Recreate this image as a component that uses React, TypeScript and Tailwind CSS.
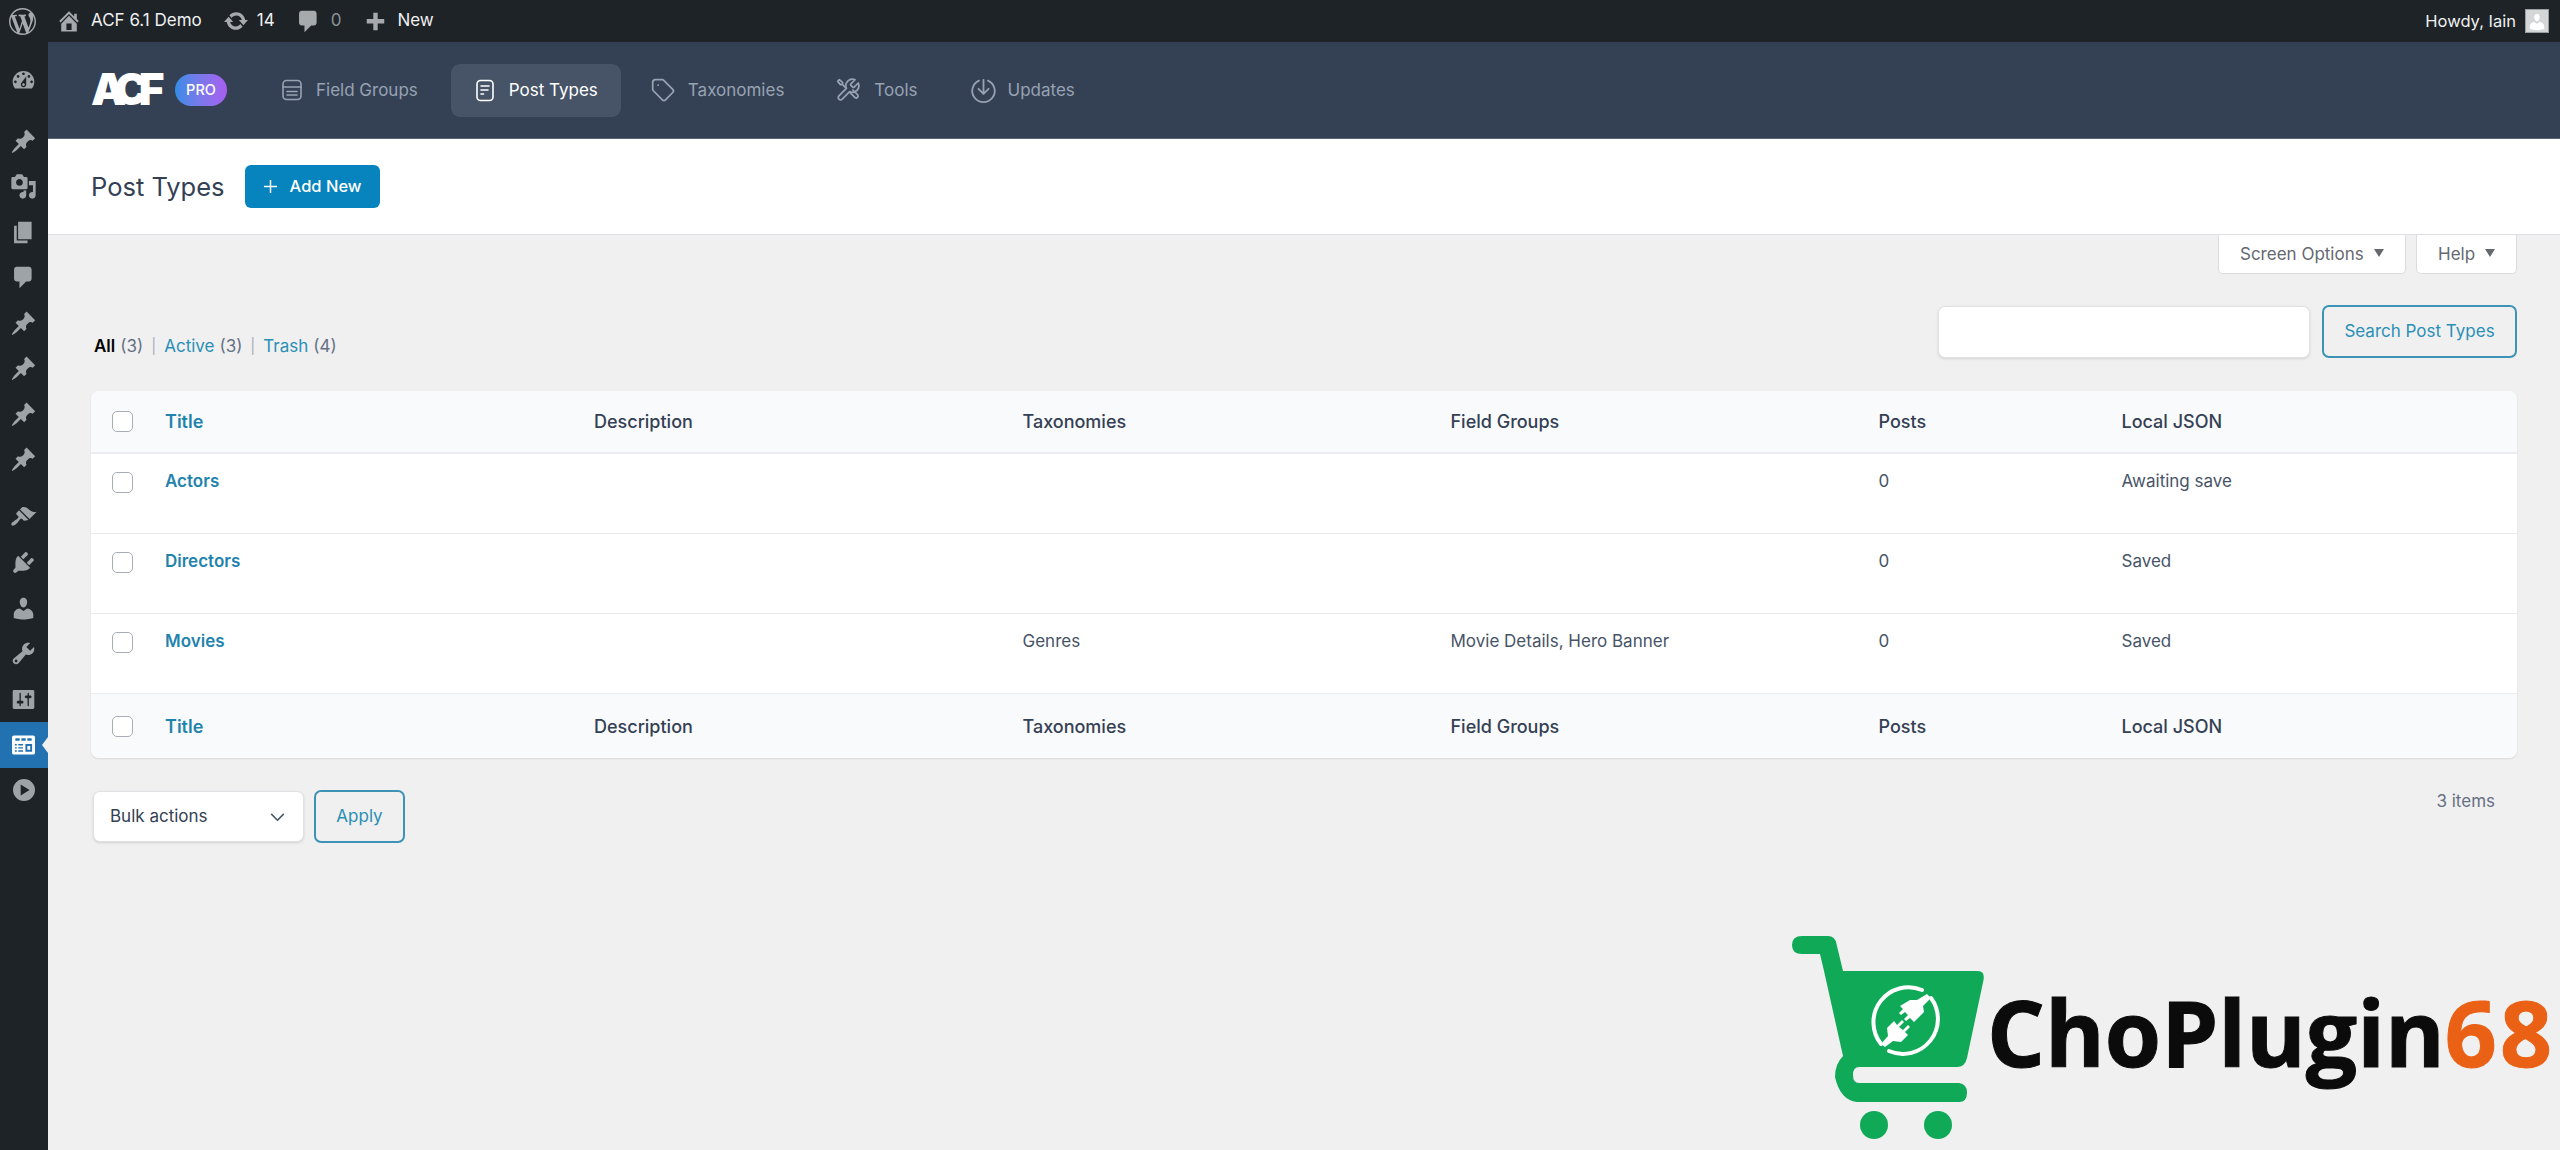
import React from "react";

const D = ({ d, className }: { d: string; className?: string }) => (
  <svg viewBox="0 0 20 20" fill="currentColor" className={className}>
    <path d={d} />
  </svg>
);

const P = {
  wp: "M20 10c0-5.51-4.49-10-10-10C4.48 0 0 4.49 0 10c0 5.52 4.48 10 10 10 5.51 0 10-4.48 10-10zM7.78 15.37L4.37 6.22c.55-.02 1.17-.08 1.17-.08.5-.06.44-1.13-.06-1.11 0 0-1.45.11-2.37.11-.18 0-.37 0-.58-.01C4.12 2.69 6.87 1.11 10 1.11c2.33 0 4.45.87 6.05 2.34-.68-.11-1.65.39-1.65 1.58 0 .74.45 1.36.9 2.1.35.61.55 1.36.55 2.46 0 1.49-1.4 5-1.4 5l-3.03-8.37c.54-.02.82-.17.82-.17.5-.05.44-1.25-.06-1.22 0 0-1.44.12-2.38.12-.87 0-2.33-.12-2.33-.12-.5-.03-.56 1.2-.06 1.22l.92.08 1.26 3.41zM17.41 10c.24-.64.74-1.87.43-4.25.7 1.29 1.05 2.71 1.05 4.25 0 3.29-1.73 6.24-4.4 7.78.97-2.59 1.94-5.2 2.92-7.78zM6.1 18.09C3.12 16.65 1.11 13.53 1.11 10c0-1.3.23-2.48.72-3.59C3.25 10.3 4.67 14.2 6.1 18.09zm4.03-6.63l2.58 6.98c-.86.29-1.76.45-2.71.45-.79 0-1.57-.11-2.29-.33.81-2.38 1.62-4.74 2.42-7.1z",
  home: "M16 8.5l1.53 1.53-1.06 1.06L10 4.62l-6.47 6.47-1.06-1.06L10 2.5l4 4v-2h2v4zm-6-2.46l6 5.99V18H4v-5.97zM12 17v-5H8v5h4z",
  update: "M10.2 3.28c3.53 0 6.43 2.61 6.92 6h2.08l-3.5 4-3.5-4h2.32c-.45-1.97-2.21-3.44-4.32-3.44-1.45 0-2.73.71-3.54 1.78L4.95 5.66C6.23 4.2 8.11 3.28 10.2 3.28zm-.4 13.44c-3.52 0-6.43-2.61-6.92-6H.8l3.5-4c1.17 1.33 2.33 2.67 3.5 4H5.48c.45 1.97 2.21 3.44 4.32 3.44 1.45 0 2.73-.71 3.54-1.78l1.71 1.95c-1.28 1.46-3.15 2.39-5.25 2.39z",
  comment: "M5 2h9c1.1 0 2 .9 2 2v7c0 1.1-.9 2-2 2h-2l-5 5v-5H5c-1.1 0-2-.9-2-2V4c0-1.1.9-2 2-2z",
  plus: "M17 8v3.5h-5.25V17h-3.5v-5.5H3V8h5.25V3h3.5v5z",
  dashboard: "M3.76 16h12.48c1.1-1.37 1.76-3.11 1.76-5 0-4.42-3.58-8-8-8s-8 3.58-8 8c0 1.89.66 3.63 1.76 5zM10 4c.55 0 1 .45 1 1s-.45 1-1 1-1-.45-1-1 .45-1 1-1zM6 6c.55 0 1 .45 1 1s-.45 1-1 1-1-.45-1-1 .45-1 1-1zm8 0c.55 0 1 .45 1 1s-.45 1-1 1-1-.45-1-1 .45-1 1-1zm-5.37 5.55L12 7v6c0 1.1-.9 2-2 2s-2-.9-2-2c0-.57.24-1.08.63-1.45zM4 10c.55 0 1 .45 1 1s-.45 1-1 1-1-.45-1-1 .45-1 1-1zm12 0c.55 0 1 .45 1 1s-.45 1-1 1-1-.45-1-1 .45-1 1-1zm-5 3c0-.55-.45-1-1-1s-1 .45-1 1 .45 1 1 1 1-.45 1-1z",
  pin: "M10.44 3.02l1.82-1.82 6.36 6.35-1.83 1.82c-1.05-.68-2.48-.57-3.41.36l-.75.75c-.92.93-1.04 2.35-.35 3.41l-1.83 1.82-2.41-2.41-2.8 2.79c-.42.42-3.38 2.71-3.8 2.29s1.86-3.39 2.28-3.81l2.79-2.79L4.1 9.36l1.83-1.82c1.05.69 2.48.57 3.4-.36l.75-.75c.93-.92 1.05-2.35.36-3.41z",
  media: "M13 11V4c0-.55-.45-1-1-1h-1.67L9 1H5L3.67 3H2c-.55 0-1 .45-1 1v7c0 .55.45 1 1 1h10c.55 0 1-.45 1-1zM7 4.5c1.38 0 2.5 1.12 2.5 2.5S8.38 9.5 7 9.5 4.5 8.38 4.5 7 5.62 4.5 7 4.5zM14 6h5v10.5c0 1.38-1.12 2.5-2.5 2.5S14 17.88 14 16.5s1.12-2.5 2.5-2.5c.17 0 .34.02.5.05V9h-3V6zm-4 8.05V13h2v3.5c0 1.38-1.12 2.5-2.5 2.5S7 17.88 7 16.5 8.12 14 9.5 14c.17 0 .34.02.5.05z",
  page: "M6 15V2h10v13H6zm-1 1h8v2H3V5h2v11z",
  brush: "M14.48 11.06L7.41 3.99l1.5-1.5c.5-.56 2.3-.47 3.51.32 1.21.8 1.43 1.28 2.91 2.1 1.18.64 2.45 1.26 4.45.85zm-.71.71L6.7 4.7 4.93 6.47c-.39.39-.39 1.02 0 1.41l1.06 1.06c.39.39.39 1.03 0 1.42-.6.6-1.43 1.11-2.21 1.69-.35.26-.7.53-1.01.84C1.43 13.23.4 14.84 1.33 15.8c.82.85 2.4-.21 3.75-1.48.33-.31.6-.62.85-.97.57-.8 1.12-1.65 1.69-2.22.39-.39 1-.39 1.4 0l1.07 1.07c.39.39 1.02.39 1.41 0z",
  plug: "M13.11 4.36L9.87 7.6 8 5.73l3.24-3.24c.35-.34 1.05-.2 1.56.32.52.51.66 1.21.31 1.55zm-8 1.77l.91-1.12 9.01 9.01-1.19.84c-.71.71-2.63 1.16-3.82 1.16H6.14L4.9 17.26c-.59.59-1.54.59-2.12 0-.59-.58-.59-1.53 0-2.12l1.24-1.24v-3.88c0-1.13.4-3.19 1.09-3.89zm7.26 3.97l3.24-3.24c.34-.35 1.04-.21 1.55.31.52.51.66 1.21.31 1.55l-3.24 3.25z",
  user: "M10 9.25c-2.27 0-2.73-3.44-2.73-3.44C7 4.02 7.82 2 9.97 2c2.16 0 2.98 2.02 2.71 3.81 0 0-.41 3.44-2.68 3.44zm0 2.57L12.72 10c2.39 0 4.52 2.33 4.52 4.53v2.49s-3.65 1.13-7.24 1.13c-3.65 0-7.24-1.13-7.24-1.13v-2.49c0-2.25 1.94-4.48 4.47-4.48z",
  tools: "M16.68 9.77c-1.34 1.34-3.3 1.67-4.95.99l-5.41 6.52c-.99.99-2.59.99-3.58 0s-.99-2.59 0-3.57l6.52-5.42c-.68-1.65-.35-3.61.99-4.95 1.28-1.28 3.12-1.62 4.72-1.06l-2.89 2.89 2.82 2.82 2.86-2.87c.53 1.58.18 3.39-1.08 4.65zM3.81 16.21c.4.39 1.04.39 1.43 0 .4-.4.4-1.04 0-1.43-.39-.4-1.03-.4-1.43 0-.39.39-.39 1.03 0 1.43z",
  settings: "M18 16V4c0-.55-.45-1-1-1H3c-.55 0-1 .45-1 1v12c0 .55.45 1 1 1h14c.55 0 1-.45 1-1zM8 11h1c.55 0 1 .45 1 1s-.45 1-1 1H8v1.5c0 .28-.22.5-.5.5s-.5-.22-.5-.5V13H6c-.55 0-1-.45-1-1s.45-1 1-1h1V5.5c0-.28.22-.5.5-.5s.5.22.5.5V11zm5-2h-1c-.55 0-1-.45-1-1s.45-1 1-1h1V5.5c0-.28.22-.5.5-.5s.5.22.5.5V7h1c.55 0 1 .45 1 1s-.45 1-1 1h-1v5.5c0 .28-.22.5-.5.5s-.5-.22-.5-.5V9z",
};

const SideRow = ({ d }: { d: string }) => (
  <div className="h-[45.5px] flex items-center justify-center pr-[1px] text-[#9ea3a8]">
    <D d={d} className="w-[27px] h-[27px]" />
  </div>
);

const Stroke = ({ children, className }: { children: React.ReactNode; className?: string }) => (
  <svg viewBox="0 0 24 24" fill="none" stroke="currentColor" strokeWidth={1.6} strokeLinecap="round" strokeLinejoin="round" className={className}>
    {children}
  </svg>
);

const NavItem = ({ icon, label, active, className }: { icon: React.ReactNode; label: string; active?: boolean; className?: string }) => (
  <div className={`h-[53px] flex items-center rounded-[9px] ${active ? "bg-[#475467] text-white" : "text-[#98a2b3]"} ${className ?? ""}`}>
    {icon}
    <span className="text-[17px] leading-none font-normal">{label}</span>
  </div>
);

const Check = () => <div className="w-[21px] h-[21px] rounded-[5px] border-[1.5px] border-[#a8adb5] bg-white" />;

const COLS = "grid grid-cols-[74px_429px_428.5px_428px_428px_243px_1fr]";

const HeadRow = ({ border, height }: { border: string; height: string }) => (
  <div className={`${COLS} ${height} ${border} items-center bg-[#f9fafb] text-[18px] font-medium text-[#344054]`}>
    <div className="pl-[21px]"><Check /></div>
    <div className="font-semibold text-[#1f84ad]">Title</div>
    <div>Description</div>
    <div>Taxonomies</div>
    <div>Field Groups</div>
    <div>Posts</div>
    <div>Local JSON</div>
  </div>
);

const BodyRow = ({ title, tax, fg, json }: { title: string; tax?: string; fg?: string; json: string }) => (
  <div className={`${COLS} h-[80px] pt-[15px] border-b border-[#e9ecf0] bg-white text-[17px] leading-[24px] text-[#475467]`}>
    <div className="pl-[21px] pt-[3px]"><Check /></div>
    <div className="font-semibold text-[#1f84ad]">{title}</div>
    <div />
    <div>{tax}</div>
    <div>{fg}</div>
    <div>0</div>
    <div>{json}</div>
  </div>
);

export default function App() {
  return (
    <div className="relative h-[1150px] w-full overflow-hidden bg-[#f0f0f0] font-['Inter',sans-serif]">
      {/* admin bar */}
      <header className="h-[42px] bg-[#1d2327] flex items-center text-[#f0f0f1] text-[17px] pl-[9px] pr-[11px]">
        <D d={P.wp} className="w-[27px] h-[27px] text-[#a7aaad]" />
        <D d={P.home} className="w-[26px] h-[26px] ml-[20px] text-[#a7aaad]" />
        <span className="ml-[9px]">ACF 6.1 Demo</span>
        <D d={P.update} className="w-[26px] h-[26px] ml-[21px] text-[#a7aaad]" />
        <span className="ml-[8px]">14</span>
        <D d={P.comment} className="w-[27px] h-[27px] ml-[20px] text-[#a7aaad]" />
        <span className="ml-[9px] text-[#8c9196]">0</span>
        <D d={P.plus} className="w-[25px] h-[25px] ml-[22px] text-[#a7aaad]" />
        <span className="ml-[9px]">New</span>
        <span className="ml-auto text-[16.5px]">Howdy, Iain</span>
        <div className="ml-[9px] w-[24px] h-[24px] bg-[#d4d6d8] border border-[#9a9ea2] flex items-end justify-center overflow-hidden">
          <svg viewBox="0 0 20 20" fill="#fff" className="w-[20px] h-[20px]"><path d={P.user} /></svg>
        </div>
      </header>

      <div className="flex h-[1108px]">
        {/* sidebar */}
        <aside className="w-[48px] shrink-0 bg-[#1d2327] pt-[15.5px]">
          <SideRow d={P.dashboard} />
          <div className="h-[15.5px]" />
          <SideRow d={P.pin} />
          <SideRow d={P.media} />
          <SideRow d={P.page} />
          <SideRow d={P.comment} />
          <SideRow d={P.pin} />
          <SideRow d={P.pin} />
          <SideRow d={P.pin} />
          <SideRow d={P.pin} />
          <div className="h-[12px]" />
          <SideRow d={P.brush} />
          <SideRow d={P.plug} />
          <SideRow d={P.user} />
          <SideRow d={P.tools} />
          <SideRow d={P.settings} />
          <div className="relative h-[45.5px] bg-[#2271b1] flex items-center justify-center pr-[1px]">
            <svg viewBox="0 0 24 20" className="w-[23px] h-[20px]">
              <path fillRule="evenodd" fill="#fff" d="M2 0h20a2 2 0 0 1 2 2v16a2 2 0 0 1-2 2H2a2 2 0 0 1-2-2V2a2 2 0 0 1 2-2zM3.500 3v2.500h4.500V3zm6.300 0v2.500h4.500V3zm6.200 0v2.500h4.500V3zM3 9v1.400h2V9zm3.500 0v1.400h5V9zM3 12.300v1.400h2v-1.400zm3.500 0v1.400h5v-1.400zM3 15.600V17h2v-1.400zm3.500 0V17h5v-1.400zM14 9v8h7V9zm2 2h3v4h-3z" />
            </svg>
            <div className="absolute right-0 top-1/2 -translate-y-1/2 w-0 h-0 border-y-[8px] border-y-transparent border-r-[6px] border-r-[#f0f0f0]" />
          </div>
          <div className="h-[45.5px] flex items-center justify-center pr-[1px] text-[#9ea3a8]">
            <svg viewBox="0 0 20 20" className="w-[22px] h-[22px]" fill="currentColor">
              <path fillRule="evenodd" d="M10 0a10 10 0 1 1 0 20 10 10 0 0 1 0-20zM7 5v10l8-5z" />
            </svg>
          </div>
        </aside>

        {/* main */}
        <main className="flex-1 min-w-0">
          <nav className="h-[97px] bg-[#344154] border-b border-[#5b6675] flex items-center pl-[43px]">
            <span className="w-[71px] text-[44px] leading-none font-black text-white tracking-[-9px] -translate-y-[1px]">ACF</span>
            <span className="ml-[13px] w-[52px] h-[32px] rounded-full bg-gradient-to-r from-[#2f8be6] to-[#a65df0] text-white text-[14.5px] font-medium flex items-center justify-center">PRO</span>
            <NavItem
              className="ml-[53px] pr-[33px]"
              label="Field Groups"
              icon={
                <Stroke className="w-[24px] h-[26px] mr-[12px]">
                  <rect x="3" y="2.5" width="18" height="19" rx="3.5" />
                  <path d="M3 9h18M7 13.500h10M7 17h10" />
                </Stroke>
              }
            />
            <NavItem
              active
              className="pl-[22px] pr-[23px] ml-0"
              label="Post Types"
              icon={
                <Stroke className="w-[24px] h-[27px] mr-[12px]">
                  <rect x="4" y="2" width="16" height="20" rx="3.5" />
                  <path d="M8 7.500h8M8 11.500h7M8 15.500h2.500" />
                </Stroke>
              }
            />
            <NavItem
              className="ml-[29px]"
              label="Taxonomies"
              icon={
                <Stroke className="w-[26px] h-[26px] mr-[12px]">
                  <path d="M2.500 5v6.200c0 .6.2 1.100.6 1.500l8.300 8.400c.8.8 2.100.8 2.900 0l6.700-6.800c.8-.8.8-2 0-2.800l-8.300-8.400c-.4-.4-.9-.6-1.500-.6H5c-1.400 0-2.500 1.100-2.500 2.500z" />
                  <path d="M7.500 7.500h.01" />
                </Stroke>
              }
            />
            <NavItem
              className="ml-[51px]"
              label="Tools"
              icon={
                <Stroke className="w-[26px] h-[26px] mr-[13px]">
                  <path d="M14.700 6.300a1 1 0 0 0 0 1.400l1.600 1.600a1 1 0 0 0 1.400 0l3.770-3.770a6 6 0 0 1-7.940 7.940l-6.910 6.910a2.120 2.120 0 0 1-3-3l6.910-6.910a6 6 0 0 1 7.940-7.940l-3.760 3.760z" />
                  <path d="M9.500 9.500 7 7H5L2.500 4 4 2.500 7 5v2M14 14.500l4.500 4.500a1.800 1.800 0 0 0 2.500-2.500l-4.500-4.500" />
                </Stroke>
              }
            />
            <NavItem
              className="ml-[53px]"
              label="Updates"
              icon={
                <Stroke className="w-[27px] h-[27px] mr-[10px]">
                  <path d="M8 3.200a10 10 0 1 0 8 0" />
                  <path d="M12 2.500V15M7.500 10.500 12 15l4.500-4.500" />
                </Stroke>
              }
            />
          </nav>

          <div className="h-[96px] bg-white border-b border-[#dcdfe3] flex items-center pl-[43px]">
            <h1 className="text-[25.5px] leading-none font-normal text-[#344054]">Post Types</h1>
            <button className="ml-[20px] w-[135px] h-[43px] rounded-[6px] bg-[#0783be] text-white text-[16.5px] font-medium flex items-center justify-center gap-[12px]">
              <svg viewBox="0 0 16 16" className="w-[15px] h-[15px]" fill="none" stroke="currentColor" strokeWidth={1.6}><path d="M8 1v14M1 8h14" /></svg>
              Add New
            </button>
          </div>

          <div className="flex justify-end gap-[10px] pr-[43px]">
            <div className="w-[188px] h-[39px] pt-[1px] bg-white rounded-b-[5px] border border-t-0 border-[#dcdcde] text-[#646970] text-[17px] flex items-center pl-[21px]">
              Screen Options
              <span className="ml-[10px] w-0 h-0 border-x-[5px] border-x-transparent border-t-[8px] border-t-[#646970] -translate-y-[2px]" />
            </div>
            <div className="w-[101px] h-[39px] pt-[1px] bg-white rounded-b-[5px] border border-t-0 border-[#dcdcde] text-[#646970] text-[17px] flex items-center pl-[21px]">
              Help
              <span className="ml-[10px] w-0 h-0 border-x-[5px] border-x-transparent border-t-[8px] border-t-[#646970] -translate-y-[2px]" />
            </div>
          </div>

          <div className="mt-[31px] flex items-start px-[43px]">
            <div className="pt-[29px] pl-[3px] text-[17px] leading-[24px] text-[#667085] flex items-center">
              <span className="font-semibold text-black">All</span>
              <span className="ml-[5px]">(3)</span>
              <span className="mx-[8px] text-[#a9afb8] text-[15px]">|</span>
              <span className="text-[#2a8fb5]">Active</span>
              <span className="ml-[5px]">(3)</span>
              <span className="mx-[8px] text-[#a9afb8] text-[15px]">|</span>
              <span className="text-[#2a8fb5]">Trash</span>
              <span className="ml-[5px]">(4)</span>
            </div>
            <div className="ml-auto w-[372px] h-[52px] mt-[1px] bg-white rounded-[7px] border border-[#dfe1e4] shadow-sm" />
            <button className="ml-[12px] w-[195px] h-[53px] pt-[1px] rounded-[7px] border-2 border-[#3d93b6] text-[#2a8fb5] text-[17px] font-normal">Search Post Types</button>
          </div>

          <section className="mx-[43px] mt-[33px] rounded-[8px] overflow-hidden shadow-[0_1px_2px_rgba(16,24,40,0.1)]">
            <HeadRow border="border-b-2 border-[#eaecf0]" height="h-[63px]" />
            <BodyRow title="Actors" json="Awaiting save" />
            <BodyRow title="Directors" json="Saved" />
            <BodyRow title="Movies" tax="Genres" fg="Movie Details, Hero Banner" json="Saved" />
            <HeadRow border="" height="h-[64px]" />
          </section>

          <div className="mt-[32px] flex items-start pl-[45px] pr-[65px]">
            <div className="w-[211px] h-[51px] mt-[1px] pt-[1px] bg-white rounded-[7px] border border-[#dfe1e4] shadow-sm flex items-center pl-[16px] pr-[18px] text-[17px] text-[#344054]">
              Bulk actions
              <svg viewBox="0 0 16 10" className="ml-auto w-[15px] h-[9px]" fill="none" stroke="#475467" strokeWidth={1.7}><path d="m1 1 7 7 7-7" /></svg>
            </div>
            <button className="ml-[10px] w-[91px] h-[53px] rounded-[7px] border-2 border-[#3d93b6] text-[#2a8fb5] text-[17px] font-normal">Apply</button>
            <span className="ml-auto mt-[-1px] text-[17px] leading-[24px] text-[#667085]">3 items</span>
          </div>
        </main>
      </div>

      {/* watermark */}
      <div className="absolute left-[1790px] top-[934px] w-[770px] h-[210px]">
        <div className="relative h-full">
          <svg viewBox="0 0 200 210" className="absolute left-0 top-0 w-[200px] h-[210px]">
            <path fill="#0fa958" d="M12 2H38Q45 2 46.500 10L53 37H188Q195 37 193.500 46L177 124Q175 133 167 133H69Q63 133 63 141Q63 149 69 149H169Q177 150 177 158.500Q177 168 169 168H67Q50 166 45 143Q45 130 53 122L34 37L30 20H12Q2 20 2 11Q2 2 12 2Z" />
            <ellipse cx="84" cy="191" rx="14" ry="14" fill="#0fa958" />
            <ellipse cx="148" cy="191" rx="14" ry="14" fill="#0fa958" />
            <g fill="none" stroke="#fff" strokeWidth="4" strokeLinecap="round">
              <path d="M132 56A35 35 0 0 0 91 110" />
              <path d="M141 64A35 35 0 0 1 99 117" />
            </g>
            <g fill="#fff">
              <path d="M91 110L98 102L97 94L104 87L107 91L112 86L114 88L109 93L113 96L118 91L120 93L115 98L118 101L111 108L103 107L95 113Z" />
              <path d="M141 64L133 72L134 78L124 88L120 84L116 87L114 85L118 81L115 78L111 81L109 79L113 75L110 72L120 66L127 66L137 60Z" />
            </g>
          </svg>
          <div className="absolute left-[197px] top-[45px] whitespace-nowrap text-[91px] leading-[106px] font-bold font-['Open_Sans',sans-serif] text-[#0b0b0b] [-webkit-text-stroke:1px_#0b0b0b]">
            ChoPlugin<span className="tracking-[3px] text-[#ea6115] [-webkit-text-stroke:1px_#ea6115]">68</span>
          </div>
        </div>
      </div>
    </div>
  );
}
